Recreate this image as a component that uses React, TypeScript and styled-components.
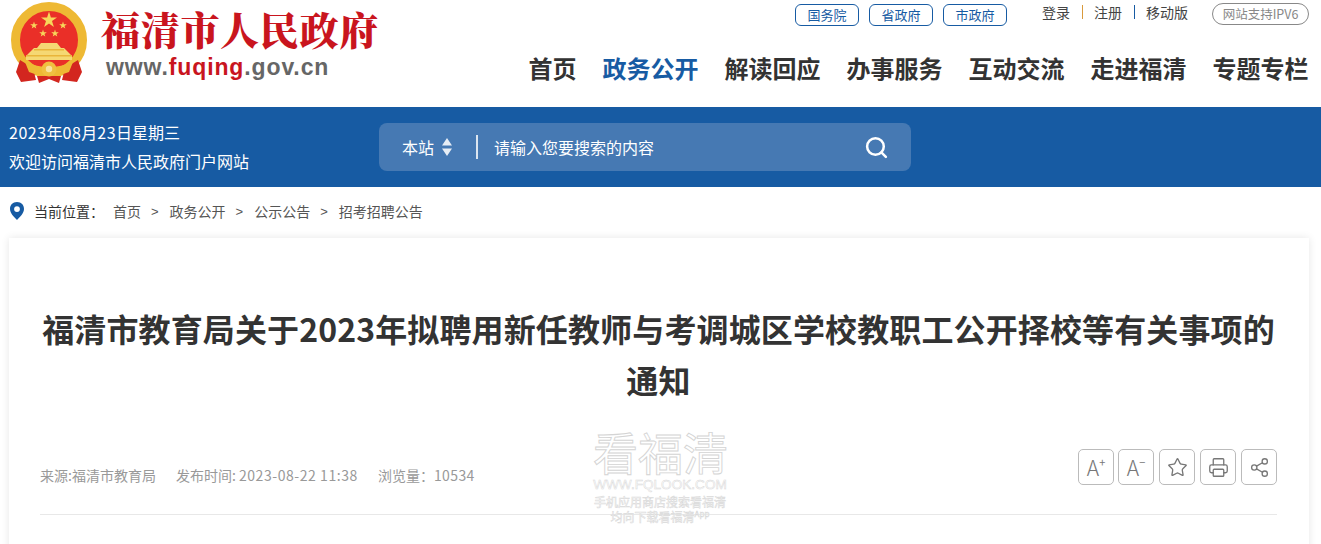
import React from "react";
import styled, { createGlobalStyle } from "styled-components";
import { Printer, Search, Share2, Star } from "lucide-react";

const CJK = `"Noto Sans CJK SC", "Liberation Sans", sans-serif`;

const GlobalStyle = createGlobalStyle`
  html, body {
    margin: 0;
    padding: 0;
    background: #fff;
    overflow: hidden;
    font-family: ${CJK};
  }
`;

const Page = styled.div`
  width: 1321px;
  height: 544px;
  overflow: hidden;
`;

// Here is the white header with logo and nav
const Header = styled.header`
  height: 107px;
  display: flex;
  justify-content: space-between;
  padding: 0 12px 0 11px;
`;

const Brand = styled.div`
  display: flex;
  gap: 15px;
  padding-top: 2px;
`;

const BrandText = styled.div`
  display: flex;
  flex-direction: column;
`;

const SiteName = styled.div`
  font-family: "Noto Serif CJK SC", ${CJK};
  font-size: 39px;
  font-weight: 900;
  line-height: 53px;
  color: #c9151e;
  white-space: nowrap;
  letter-spacing: 0.7px;
  margin-left: -1px;
`;

const SiteUrl = styled.div`
  font-family: "Liberation Sans", sans-serif;
  font-size: 23px;
  font-weight: 700;
  line-height: 24px;
  color: #666;
  margin-left: 4px;
  letter-spacing: 0.88px;
  white-space: nowrap;

  span {
    color: #c9151e;
  }
`;

const HeaderRight = styled.div`
  display: flex;
  flex-direction: column;
  align-items: flex-end;
`;

const TopRow = styled.div`
  height: 28px;
  padding-top: 3px;
  box-sizing: border-box;
  display: flex;
  align-items: flex-start;
`;

const GovLinks = styled.div`
  display: flex;
  gap: 10px;
  margin-top: 1px;
  margin-right: 35px;
`;

const GovLink = styled.a`
  width: 64px;
  height: 22px;
  box-sizing: border-box;
  border: 1px solid #175ba3;
  border-radius: 6px;
  color: #175ba3;
  font-size: 13px;
  line-height: 20px;
  text-align: center;
`;

const UserLinks = styled.div`
  display: flex;
  align-items: center;
  height: 20px;
  margin-top: -1px;
  margin-right: 24px;
  font-size: 14px;
  color: #444;
`;

const Divider = styled.i<{ $color: string }>`
  width: 1px;
  height: 14px;
  margin: 0 11.5px;
  background: ${(p) => p.$color};
`;

const IpvBadge = styled.div`
  width: 97px;
  height: 22px;
  box-sizing: border-box;
  border: 1px solid #888;
  border-radius: 11px;
  color: #888;
  font-size: 12.5px;
  line-height: 20px;
  text-align: center;
  white-space: nowrap;
`;

const Nav = styled.nav`
  display: flex;
  gap: 26px;
  margin-top: 18px;
  margin-right: 0.5px;
`;

const NavItem = styled.a<{ $active?: boolean }>`
  font-size: 24px;
  font-weight: 700;
  line-height: 44px;
  color: ${(p) => (p.$active ? "#175ba3" : "#333")};
  white-space: nowrap;
`;

// Blue band
const Band = styled.section`
  height: 80px;
  background: #175ba3;
  display: flex;
  align-items: center;
  padding-left: 9px;
`;

const DateBlock = styled.div`
  width: 370px;
  color: #fff;
  font-size: 16px;
  line-height: 29px;
  margin-top: -1px;
`;

const SearchBox = styled.div`
  width: 532px;
  height: 48px;
  border-radius: 8px;
  background: #4679b3;
  display: flex;
  align-items: center;
  color: #fff;
`;

const Scope = styled.div`
  width: 99px;
  height: 24px;
  display: flex;
  align-items: center;
  padding-left: 23px;
  gap: 8px;
  box-sizing: border-box;
  border-right: 2px solid #dbe5f0;
  font-size: 16px;
`;

const Placeholder = styled.div`
  flex: 1;
  padding-left: 16px;
  font-size: 16px;
`;

const SearchBtn = styled.div`
  width: 70px;
  display: flex;
  justify-content: center;
`;

const Crumbs = styled.div`
  height: 51px;
  box-sizing: border-box;
  padding: 0 0 3px 9px;
  display: flex;
  align-items: center;
  font-size: 14px;
  color: #555;
`;

const CrumbLabel = styled.span`
  color: #333;
  margin-left: 9px;
  width: 79px;
`;

const CrumbSep = styled.span`
  margin: 0 11px 0 10px;
  font-family: "Liberation Sans", sans-serif;
  font-size: 13px;
`;

const Card = styled.article`
  position: relative;
  width: 1300px;
  height: 400px;
  margin-left: 9px;
  box-sizing: border-box;
  padding: 65px 32px 0 31px;
  background: #fff;
  box-shadow: 0 0 8px rgba(0, 0, 0, 0.1);
`;

const Title = styled.h1`
  margin: 0;
  font-size: 32px;
  font-weight: 700;
  line-height: 51px;
  letter-spacing: 0.13px;
  color: #333;
  text-align: center;
`;

const MetaRow = styled.div`
  margin-top: 44px;
  height: 66px;
  box-sizing: border-box;
  display: flex;
  align-items: flex-start;
  justify-content: space-between;
  border-bottom: 1px solid #e8e8e8;
`;

const Meta = styled.div`
  display: flex;
  gap: 20px;
  font-size: 14px;
  line-height: 52px;
  color: #999;
`;

// digits in the date and meta lines run a bit wider than the Chinese text
const Digits = styled.span<{ $spacing: number }>`
  letter-spacing: ${(p) => p.$spacing}px;
`;

const Tools = styled.div`
  display: flex;
  gap: 5px;
`;

const ToolBtn = styled.button`
  width: 36px;
  height: 36px;
  padding: 0;
  background: #fff;
  border: 1px solid #bbb;
  border-radius: 5px;
  color: #777;
  display: flex;
  align-items: center;
  justify-content: center;
  font-family: ${CJK};
  font-weight: 300;
  font-size: 21px;

  &:first-child {
    margin-right: -1px;
  }

  sup {
    font-size: 11px;
    font-weight: 400;
    line-height: 1;
    margin-top: -9px;
  }
`;

// Watermark sits over the article
const Watermark = styled.div`
  position: absolute;
  left: 584px;
  top: 190px;
  width: 134px;
  text-align: center;
  color: #fff;
  -webkit-text-stroke: 0.5px #d8d8d8;
  white-space: nowrap;
`;

const WmBig = styled.div`
  font-size: 45px;
  line-height: 48px;
  font-weight: 400;
  -webkit-text-stroke: 0.9px #d4d4d4;
`;

const WmUrl = styled.div`
  font-family: "Liberation Sans", sans-serif;
  font-size: 13.6px;
  line-height: 18px;
  -webkit-text-stroke: 0.5px #d8d8d8;
`;

const WmLine = styled.div`
  font-size: 12px;
  line-height: 15px;

  sup {
    font-size: 8px;
    line-height: 1;
  }
`;

const Emblem = () => (
  <svg width="76" height="84" viewBox="0 0 76 84">
    <circle cx="38" cy="38" r="33.5" fill="#ea2f28" stroke="#eeb934" strokeWidth="9" />
    <polygon points="38,9.5 39.9,15.4 46,15.4 41,19 42.9,25 38,21.4 33.1,25 35,19 30,15.4 36.1,15.4" fill="#f7d65a" />
    <polygon points="23,19.5 23.9,22.2 26.8,22.2 24.5,23.9 25.3,26.6 23,25 20.7,26.6 21.5,23.9 19.2,22.2 22.1,22.2" fill="#f7d65a" />
    <polygon points="52,19.5 52.9,22.2 55.8,22.2 53.5,23.9 54.3,26.6 52,25 49.7,26.6 50.5,23.9 48.2,22.2 51.1,22.2" fill="#f7d65a" />
    <polygon points="32,27.5 32.9,30.2 35.8,30.2 33.5,31.9 34.3,34.6 32,33 29.7,34.6 30.5,31.9 28.2,30.2 31.1,30.2" fill="#f7d65a" />
    <polygon points="44,27.5 44.9,30.2 47.8,30.2 45.5,31.9 46.3,34.6 44,33 41.7,34.6 42.5,31.9 40.2,30.2 43.1,30.2" fill="#f7d65a" />
    <path d="M30 41 H46 L50 46 H53 L61 54 V58 H15 V54 L23 46 H26 Z" fill="#f5d873" />
    <path d="M23 47 H53 V48.5 H23 Z M15 53 H61 V54.5 H15 Z" fill="#e9b53a" />
    <path d="M9 58 L22 66 L25 78 L10 80 L5 70 Z M67 58 L54 66 L51 78 L66 80 L71 70 Z" fill="#d3261f" />
    <path d="M26 74 H50 L48 81 L38 77 L28 81 Z" fill="#d3261f" />
    <path d="M14 60 Q38 70 62 60 L58 70 Q38 78 18 70 Z" fill="#eeb934" />
    <circle cx="38" cy="67" r="7.5" fill="#f0c040" />
    <circle cx="38" cy="67" r="3.2" fill="#f9e3a0" />
  </svg>
);

const navItems = ["首页", "政务公开", "解读回应", "办事服务", "互动交流", "走进福清", "专题专栏"];

export default function App() {
  return (
    <Page>
      <GlobalStyle />
      <Header>
        <Brand>
          <Emblem />
          <BrandText>
            <SiteName>福清市人民政府</SiteName>
            <SiteUrl>
              www.<span>fuqing</span>.gov.cn
            </SiteUrl>
          </BrandText>
        </Brand>
        <HeaderRight>
          <TopRow>
            <GovLinks>
              <GovLink>国务院</GovLink>
              <GovLink>省政府</GovLink>
              <GovLink>市政府</GovLink>
            </GovLinks>
            <UserLinks>
              <span>登录</span>
              <Divider $color="#d99a3c" />
              <span>注册</span>
              <Divider $color="#175ba3" />
              <span>移动版</span>
            </UserLinks>
            <IpvBadge>网站支持IPV6</IpvBadge>
          </TopRow>
          <Nav>
            {navItems.map((item) => (
              <NavItem key={item} $active={item === "政务公开"}>
                {item}
              </NavItem>
            ))}
          </Nav>
        </HeaderRight>
      </Header>

      <Band>
        <DateBlock>
          <div>
            <Digits $spacing={0.5}>2023</Digits>年<Digits $spacing={0.5}>08</Digits>月<Digits $spacing={0.5}>23</Digits>日星期三
          </div>
          <div>欢迎访问福清市人民政府门户网站</div>
        </DateBlock>
        <SearchBox>
          <Scope>
            本站
            <svg width="10" height="18" viewBox="0 0 10 18" fill="#e6edf5">
              <path d="M5 0 L10 7.5 H0 Z M5 18 L0 10.5 H10 Z" />
            </svg>
          </Scope>
          <Placeholder>请输入您要搜索的内容</Placeholder>
          <SearchBtn>
            <Search size={25} strokeWidth={2.4} color="#fff" />
          </SearchBtn>
        </SearchBox>
      </Band>

      <Crumbs>
        <svg width="16" height="18" viewBox="0 0 16 18">
          <path
            fillRule="evenodd"
            d="M8 0 C3.6 0 1 3.2 1 7 C1 11 5 15 8 18 C11 15 15 11 15 7 C15 3.2 12.4 0 8 0 Z M8 4.2 A2.9 2.9 0 1 1 8 10 A2.9 2.9 0 1 1 8 4.2 Z"
            fill="#175ba3"
          />
        </svg>
        <CrumbLabel>当前位置：</CrumbLabel>
        <span>首页</span>
        <CrumbSep>&gt;</CrumbSep>
        <span>政务公开</span>
        <CrumbSep>&gt;</CrumbSep>
        <span>公示公告</span>
        <CrumbSep>&gt;</CrumbSep>
        <span>招考招聘公告</span>
      </Crumbs>

      <Card>
        <Title>福清市教育局关于2023年拟聘用新任教师与考调城区学校教职工公开择校等有关事项的通知</Title>
        <MetaRow>
          <Meta>
            <span>来源:福清市教育局</span>
            <span>
              发布时间: <Digits $spacing={0.56}>2023-08-22 11:38</Digits>
            </span>
            <span>
              浏览量：<Digits $spacing={0.4}>10534</Digits>
            </span>
          </Meta>
          <Tools>
            <ToolBtn>
              A<sup>+</sup>
            </ToolBtn>
            <ToolBtn>
              A<sup>−</sup>
            </ToolBtn>
            <ToolBtn>
              <Star size={21} strokeWidth={1.5} />
            </ToolBtn>
            <ToolBtn>
              <Printer size={21} strokeWidth={1.5} />
            </ToolBtn>
            <ToolBtn>
              <Share2 size={21} strokeWidth={1.5} />
            </ToolBtn>
          </Tools>
        </MetaRow>
        <Watermark>
          <WmBig>看福清</WmBig>
          <WmUrl>WWW.FQLOOK.COM</WmUrl>
          <WmLine>手机应用商店搜索看福清</WmLine>
          <WmLine>
            均向下载看福清<sup>App</sup>
          </WmLine>
        </Watermark>
      </Card>
    </Page>
  );
}
